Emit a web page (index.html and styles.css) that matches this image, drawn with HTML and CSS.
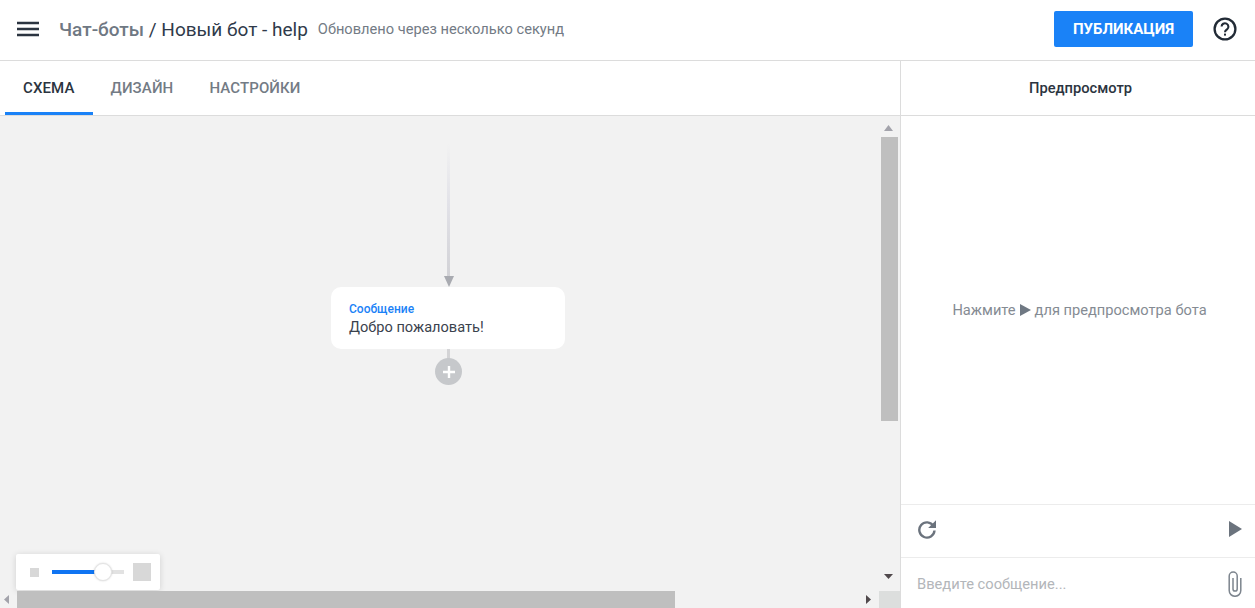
FILE: index.html
```html
<!DOCTYPE html>
<html lang="ru">
<head>
<meta charset="utf-8">
<title>Новый бот - help</title>
<link rel="stylesheet" href="styles.css">
</head>
<body>
<header class="topbar">
  <svg class="menu-icon" width="22" height="16" viewBox="0 0 22 16"><path d="M0 2h22M0 8h22M0 14h22" stroke="#2b3440" stroke-width="2.500" fill="none"/></svg>
  <div class="crumbs"><span class="crumb-link">Чат-боты</span> / Новый бот - help</div>
  <div class="updated">Обновлено через несколько секунд</div>
  <div class="spacer"></div>
  <button class="publish">ПУБЛИКАЦИЯ</button>
  <svg class="help-icon" width="24" height="24" viewBox="0 0 24 24"><circle cx="12" cy="12" r="10.400" fill="none" stroke="#222b36" stroke-width="2.300"/><path d="M8.600 9.600a3.400 3.400 0 1 1 5.500 2.700c-1.200.9-2.100 1.500-2.100 3" fill="none" stroke="#222b36" stroke-width="2.100"/><rect x="11" y="16.600" width="2" height="2" fill="#222b36"/></svg>
</header>
<main class="workspace">
  <section class="editor">
    <nav class="tabs">
      <div class="tab active">СХЕМА</div>
      <div class="tab">ДИЗАЙН</div>
      <div class="tab">НАСТРОЙКИ</div>
    </nav>
    <div class="canvas">
      <div class="edge-top"></div>
      <div class="arrow-head"></div>
      <div class="node">
        <div class="node-type">Сообщение</div>
        <div class="node-text">Добро пожаловать!</div>
      </div>
      <div class="edge-bottom"></div>
      <div class="add-btn"><svg width="14" height="14" viewBox="0 0 14 14"><path d="M7 1v12M1 7h12" stroke="#fff" stroke-width="2.400" fill="none"/></svg></div>
      <div class="zoom-panel">
        <div class="zoom-small"></div>
        <div class="zoom-track"><div class="zoom-fill"></div><div class="zoom-thumb"></div></div>
        <div class="zoom-large"></div>
      </div>
      <div class="vscroll">
        <svg class="v-up" width="9" height="6" viewBox="0 0 9 6"><path d="M4.500 0L9 6H0z" fill="#a3a3ab"/></svg>
        <div class="vthumb"></div>
        <svg class="v-down" width="9" height="5" viewBox="0 0 9 5"><path d="M0 0h9L4.500 5z" fill="#50494c"/></svg>
      </div>
      <div class="hscroll">
        <svg class="h-left" width="5" height="9" viewBox="0 0 5 9"><path d="M5 0v9L0 4.500z" fill="#a3a3ab"/></svg>
        <div class="hthumb"></div>
        <svg class="h-right" width="5" height="9" viewBox="0 0 5 9"><path d="M0 0v9l5-4.500z" fill="#50494c"/></svg>
        <div class="corner"></div>
      </div>
    </div>
  </section>
  <aside class="preview">
    <div class="preview-title">Предпросмотр</div>
    <div class="preview-body">Нажмите <svg class="inline-play" width="11" height="12" viewBox="0 0 11 12"><path d="M0 0l11 6-11 6z" fill="#6f7883"/></svg> для предпросмотра бота</div>
    <div class="preview-controls">
      <svg width="20" height="20" viewBox="0 0 20 20"><path d="M16.400 7A7.600 7.600 0 1 0 17.500 11.500" fill="none" stroke="#6b737d" stroke-width="2.400"/><path d="M19 1.200V9h-7.800z" fill="#6b737d"/></svg>
      <svg width="13" height="16" viewBox="0 0 13 16"><path d="M0 0l13 8-13 8z" fill="#6b737d"/></svg>
    </div>
    <div class="preview-input">
      <span class="placeholder">Введите сообщение...</span>
      <svg width="14" height="26" viewBox="0 0 14 26"><path d="M12.800 7v12.500a5.800 5.800 0 0 1-11.600 0V5a4 4 0 0 1 8 0v13a2.100 2.100 0 0 1-4.200 0V7" fill="none" stroke="#7d858e" stroke-width="1.500"/></svg>
    </div>
  </aside>
</main>
</body>
</html>
```
FILE: styles.css
```css
* { box-sizing: border-box; }
html, body { margin: 0; height: 100%; overflow: hidden; }
body { width: 1255px; height: 608px; background: #fff; font-family: Roboto, "Noto Sans", sans-serif; color: #2b3440; display: flex; flex-direction: column; }

.topbar { height: 61px; flex: none; display: flex; align-items: center; border-bottom: 1px solid #dcdcdc; padding: 0 18px 2px 17px; }
.menu-icon { flex: none; margin-right: 20px; }
.crumbs { font-size: 19px; color: #2f3a4a; }
.crumb-link { color: #6f7883; font-weight: 500; }
.updated { font-size: 14.650px; color: #737b85; margin-left: 10px; }
.spacer { flex: 1; }
.publish { width: 139px; height: 36px; border: 0; border-radius: 2px; background: #1a82f7; color: #fff; font: 700 15px Roboto, sans-serif; padding: 0; }
.help-icon { margin-left: 20px; flex: none; }

.workspace { flex: 1; display: flex; min-height: 0; }
.editor { flex: none; display: flex; flex-direction: column; border-right: 1px solid #dcdcdc; width: 901px; }
.tabs { height: 55px; flex: none; display: flex; padding-left: 5px; border-bottom: 1px solid #dcdcdc; }
.tab { height: 54px; padding: 0 18px; line-height: 55px; font-size: 15px; letter-spacing: .12px; font-weight: 500; color: #737b85; }
.tab.active { color: #2b3440; border-bottom: 3px solid #1a82f7; }

.canvas { flex: 1; position: relative; background: #f2f2f2; overflow: hidden; }
.edge-top { position: absolute; left: 447px; top: 27px; width: 3px; height: 134px; background: linear-gradient(#f2f2f2, #e2e2e8 45%, #d2d2d6); }
.arrow-head { position: absolute; left: 444px; top: 160px; border-left: 5px solid transparent; border-right: 5px solid transparent; border-top: 11px solid #a9abb1; }
.node { position: absolute; left: 331px; top: 171px; width: 234px; height: 62px; border-radius: 10px; background: #fff; padding: 15px 18px; }
.node-type { font-size: 12px; font-weight: 500; color: #1a82f7; line-height: 15px; }
.node-text { font-size: 14.600px; color: #3a424d; line-height: 19px; margin-top: 1px; }
.edge-bottom { position: absolute; left: 447px; top: 233px; width: 3px; height: 10px; background: #d4d4d6; }
.add-btn { position: absolute; left: 435px; top: 242px; width: 27px; height: 27px; border-radius: 50%; background: #c6c8cb; display: flex; align-items: center; justify-content: center; }

.zoom-panel { position: absolute; left: 16px; top: 438px; width: 144px; height: 36px; background: #fff; border-radius: 2px; box-shadow: 0 1px 6px rgba(0,0,0,.14); display: flex; align-items: center; padding-left: 14px; }
.zoom-small { width: 9px; height: 9px; background: #d8d8d8; }
.zoom-track { position: relative; width: 72px; height: 4px; background: #e2e2e2; margin-left: 13px; }
.zoom-fill { width: 50px; height: 4px; background: #0f74f2; }
.zoom-thumb { position: absolute; left: 42px; top: -7px; width: 18px; height: 18px; border-radius: 50%; background: #fff; border: 1px solid #e4e4e4; box-shadow: 0 0 2px rgba(0,0,0,.18); }
.zoom-large { width: 18px; height: 18px; background: #d8d8d8; margin-left: 9px; }

.vscroll { position: absolute; left: 879px; top: 0; width: 21px; height: 475px; }
.v-up { position: absolute; left: 5px; top: 9px; display: block; }
.vthumb { position: absolute; left: 2px; top: 21px; width: 17px; height: 284px; background: #bfbfbf; }
.v-down { position: absolute; left: 5px; top: 458px; display: block; }
.hscroll { position: absolute; left: 0; top: 475px; width: 900px; height: 17px; }
.h-left { position: absolute; left: 4px; top: 4px; display: block; }
.hthumb { position: absolute; left: 17px; top: 0; width: 658px; height: 17px; background: #bfbfbf; }
.h-right { position: absolute; left: 866px; top: 4px; display: block; }
.corner { position: absolute; left: 879px; top: 0; width: 21px; height: 17px; background: #dcdedd; }

.preview { flex: 1; display: flex; flex-direction: column; min-width: 0; }
.preview-title { height: 55px; flex: none; line-height: 55px; text-align: center; font-size: 14.700px; font-weight: 500; color: #2b3440; border-bottom: 1px solid #dcdcdc; padding-left: 5px; }
.preview-body { flex: 1; display: flex; align-items: center; justify-content: center; gap: 4px; font-size: 14.650px; color: #858b93; padding-left: 3px; }
.inline-play { flex: none; }
.preview-controls { height: 53px; flex: none; display: flex; align-items: center; justify-content: space-between; padding: 0 13px 4px 16px; border-top: 1px solid #ececec; }
.preview-input { height: 51px; flex: none; display: flex; align-items: center; justify-content: space-between; padding: 2px 13px 0 16px; border-top: 1px solid #ececec; }
.placeholder { font-size: 14.700px; color: #b3b6ba; }
```
